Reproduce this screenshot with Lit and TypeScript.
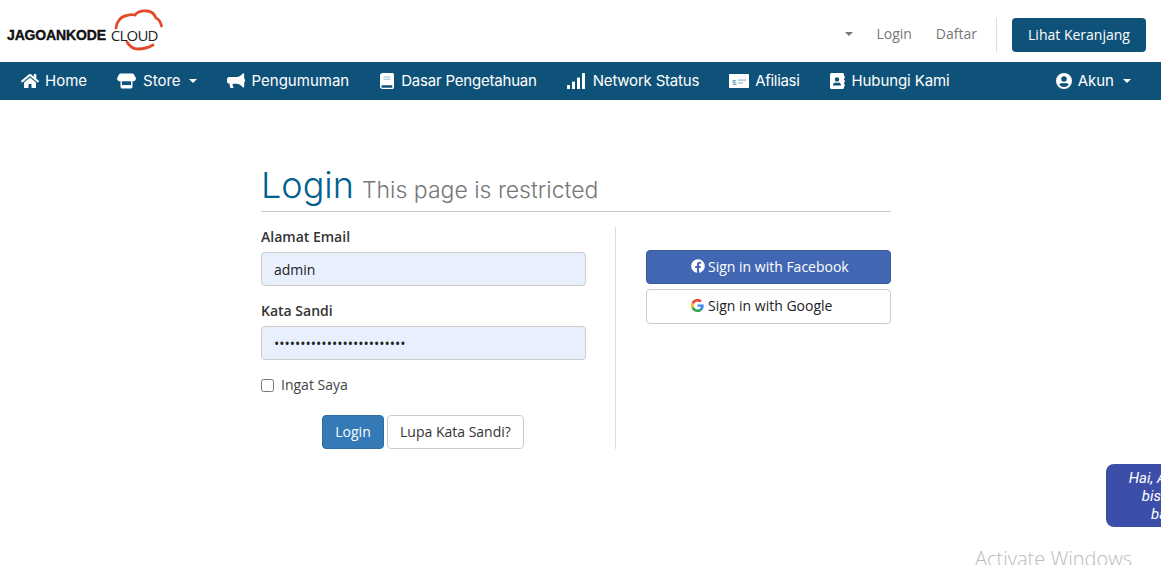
import { LitElement, html, css, svg } from "lit";
import { customElement } from "lit/decorators.js";

const ic = (vb: string, w: number, h: number, body: unknown) => html`<svg class="ic" viewBox=${vb} width=${w} height=${h} fill="currentColor" aria-hidden="true">${body}</svg>`;

const home = ic("0 0 576 512", 18, 16, svg`<path d="M280.37 148.26L96 300.11V464a16 16 0 0 0 16 16l112.06-.29a16 16 0 0 0 15.92-16V368a16 16 0 0 1 16-16h64a16 16 0 0 1 16 16v95.64a16 16 0 0 0 16 16.05L464 480a16 16 0 0 0 16-16V300L295.67 148.26a12.19 12.19 0 0 0-15.3 0zM571.6 251.47L488 182.56V44.05a12 12 0 0 0-12-12h-56a12 12 0 0 0-12 12v72.61L318.47 43a48 48 0 0 0-61 0L4.34 251.47a12 12 0 0 0-1.6 16.9l25.5 31A12 12 0 0 0 45.15 301l235.22-193.74a12.19 12.19 0 0 1 15.3 0L530.9 301a12 12 0 0 0 16.9-1.6l25.5-31a12 12 0 0 0-1.7-16.93z"/>`);
const store = ic("0 0 20 16", 19, 16, svg`<path d="M4 0h12c1 0 1.600.5 2 1.300L20 5.200c0 1.700-1.200 3-2.700 3-.4 0-.7-.1-1-.2v6c0 1.100-.9 2-2 2H5.700c-1.100 0-2-.9-2-2V8c-.3.1-.6.2-1 .2C1.200 8.200 0 6.900 0 5.200l2-3.900C2.400.5 3 0 4 0z"/><path fill="#0f5279" d="M5.200 8.300h9.600v4H5.200z"/>`);
const bullhorn = ic("0 0 18 16", 18, 16, svg`<path d="M16.300.300c-.4 0-.6.200-.8.500C14 2.500 12 4 9.500 4H2.200C1 4 0 5 0 6.300v2.200c0 1.200 1 2.200 2.200 2.200h.6l-.1 1c0 1 .3 2.200.8 3.300h3.300c-.7-1-1.200-2.100-1.200-3.300l.1-1h3.800c2.500 0 4.500 1.500 6 3.200.2.300.5.500.8.500.9 0 .9-.7.900-1V9.200c.5-.2.800-1 .8-1.800s-.3-1.600-.8-1.800V1.300c0-.3 0-1-.9-1z"/>`);
const book = ic("0 0 14 16", 14, 16, svg`<path fill-rule="evenodd" d="M2.500 0H12.500C13.300 0 14 .700 14 1.500v13c0 .800-.7 1.500-1.500 1.500H2.500C1.100 16 0 14.900 0 13.500v-11C0 1.100 1.100 0 2.500 0zM2.500 12.300a1.200 1.200 0 0 0 0 2.400h9.800v-2.400z"/><path fill="#9fb8c8" d="M3.500 3.500h7v1h-7zM3.500 5.800h7v1h-7z"/>`);
const signal = ic("0 0 18 16", 18, 16, svg`<rect x="0" y="12" width="3" height="4" rx=".6"/><rect x="5" y="8.500" width="3" height="7.500" rx=".6"/><rect x="10" y="4.500" width="3" height="11.500" rx=".6"/><rect x="15" y="0" width="3" height="16" rx=".6"/>`);
const money = ic("0 0 20 14", 20, 14, svg`<path d="M1 0h18c.6 0 1 .4 1 1v12c0 .6-.4 1-1 1H1c-.6 0-1-.4-1-1V1c0-.6.4-1 1-1z"/><path fill="#9fb8c8" d="M9 5.500h8v1.200H9zM9 8.300h5v1.200H9z"/><text x="3" y="10.500" font-size="8" font-family="Liberation Sans" fill="#4f87a8">$</text>`);
const contact = ic("0 0 15 16", 15, 16, svg`<path fill-rule="evenodd" d="M1.500 0H12.500C13.300 0 14 .700 14 1.500v13c0 .800-.7 1.500-1.500 1.500H1.500C.7 16 0 15.300 0 14.500v-13C0 .700.700 0 1.500 0zM7 4.200a2.200 2.200 0 1 0 0 4.400 2.200 2.200 0 0 0 0-4.400zM3 12.400h8c0-1.900-1.400-3-2.600-3-.5 0-.8.300-1.400.3s-.9-.3-1.400-.3C4.400 9.400 3 10.500 3 12.400z"/><path d="M14.300 3H15v2.500h-.7zM14.300 7H15v2.500h-.7zM14.300 11H15v2.500h-.7z"/>`);
const user = ic("0 0 16 16", 16, 16, svg`<path fill-rule="evenodd" d="M8 0a8 8 0 1 1 0 16A8 8 0 0 1 8 0zM8 3.200a2.800 2.800 0 1 0 0 5.600 2.800 2.800 0 0 0 0-5.600zM8 14a6 6 0 0 0 4.700-2.300C12.200 10.600 11 9.900 10 9.900c-.6 0-1 .3-2 .3s-1.400-.3-2-.3c-1 0-2.200.7-2.700 1.800A6 6 0 0 0 8 14z"/>`);
const fb = ic("0 0 512 512", 14, 14, svg`<path d="M504 256C504 119 393 8 256 8S8 119 8 256c0 123.780 90.690 226.380 209.250 245V327.690h-63V256h63v-54.640c0-62.150 37-96.480 93.670-96.480 27.140 0 55.520 4.840 55.520 4.840v61h-31.280c-30.800 0-40.410 19.120-40.410 38.730V256h68.780l-11 71.690h-57.780V501C413.310 482.380 504 379.780 504 256z"/>`);
const google = html`<svg class="ic" viewBox="0 0 48 48" width="13" height="13" aria-hidden="true"><path fill="#EA4335" d="M24 9.500c3.500 0 6.700 1.200 9.200 3.600l6.900-6.900C35.900 2.400 30.500 0 24 0 14.600 0 6.500 5.400 2.600 13.200l8 6.200C12.400 13.700 17.700 9.500 24 9.500z"/><path fill="#4285F4" d="M47 24.500c0-1.600-.1-3.100-.4-4.500H24v9h12.900c-.6 3-2.200 5.500-4.700 7.200l7.700 6c4.500-4.200 7.100-10.400 7.100-17.700z"/><path fill="#FBBC05" d="M10.500 28.600c-.5-1.400-.8-3-.8-4.600s.3-3.200.8-4.600l-8-6.200C.9 16.400 0 20.100 0 24s.9 7.600 2.600 10.800z"/><path fill="#34A853" d="M24 48c6.500 0 11.900-2.100 15.900-5.800l-7.700-6c-2.200 1.400-4.900 2.300-8.200 2.300-6.300 0-11.600-4.200-13.500-9.900l-8 6.200C6.500 42.600 14.600 48 24 48z"/></svg>`;

@customElement("app-root")
export class AppRoot extends LitElement {
  static styles = css`
    :host { display: block; position: relative; height: 565px; overflow: hidden; background: #fff; font-family: "Open Sans", sans-serif; font-size: 14px; color: #333; }
    * { box-sizing: border-box; }
    .ic { display: block; flex: none; }
    .top { height: 62px; display: flex; align-items: center; padding: 8px 15px 0 7px; }
    .logo { position: relative; display: flex; align-items: center; height: 44px; width: 156px; }
    .logo svg { position: absolute; left: 106px; top: -5px; }
    .logo b { position: relative; font: 900 14px/1 "Liberation Sans", sans-serif; letter-spacing: -.15px; color: #111; -webkit-text-stroke: .4px #111; }
    .logo span { position: relative; font: 400 15px/1 "Open Sans", sans-serif; color: #222; margin-left: 5px; letter-spacing: -.8px; }
    .top-right { margin-left: auto; display: flex; align-items: center; color: #777; }
    .caret { width: 0; height: 0; border-left: 4.500px solid transparent; border-right: 4.500px solid transparent; border-top: 4.500px solid currentColor; flex: none; }
    .top-right .caret { margin-bottom: 2px; }
    .top-right a { margin-left: 24px; padding-bottom: 3px; }
    .top-right a.first { margin-left: 23px; }
    .sep { width: 1px; height: 34px; background: #ddd; margin: 0 15px 0 19px; }
    .cart { width: 134px; height: 34px; border-radius: 4px; background: #0f5279; color: #fff; display: flex; align-items: center; justify-content: center; padding-bottom: 2px; }
    nav { height: 38px; background: #0f5279; color: #fff; display: flex; align-items: center; padding-left: 6px; font-family: Inter, sans-serif; font-size: 15px; }
    .item { display: flex; align-items: center; gap: 7px; padding: 0 15px; white-space: nowrap; }
    .item.g6 { gap: 6px; }
    .item.g8 { gap: 8px; }
    .item.wide { padding-right: 16px; }
    .item > .caret { margin-left: 1px; }
    .item span { display: block; padding-bottom: 2px; }
    .item.t1 span { letter-spacing: -.1px; }
    .item.t2 span { letter-spacing: -.2px; }
    .item.t3 span { letter-spacing: -.3px; }
    .spacer { flex: 1; }
    .item.akun { padding-right: 30px; gap: 6px; }
    .item.akun .caret { margin-left: 3px; }
    main { width: 630px; margin: 0 0 0 261px; padding-top: 62px; }
    .head { height: 50px; border-bottom: 1px solid #ccc; display: flex; align-items: baseline; gap: 8px; color: #00618f; font-family: Inter, sans-serif; font-size: 36px; font-weight: 300; line-height: 47px; }
    .head small { font-size: 23px; color: #777; font-weight: 300; }
    .cols { display: flex; margin-top: 15px; }
    .left { width: 355px; padding-right: 29px; border-right: 1px solid #ddd; height: 222px; }
    .right { margin-left: 30px; width: 245px; padding-top: 23px; }
    label.lbl { display: block; font-weight: 600; height: 25px; line-height: 20px; }
    input.tx { display: block; width: 325px; height: 34px; background: #e8f0fe; border: 1px solid #ccc; border-radius: 4px; padding: 0 12px; font: 14px "Open Sans", sans-serif; color: #222; margin-bottom: 15px; outline: none; }
    .chk { display: flex; align-items: center; gap: 7px; color: #444; height: 20px; }
    .chk input { margin: 0; width: 13px; height: 13px; }
    .chk span { display: block; padding-bottom: 2px; }
    .acts { display: flex; gap: 3px; margin-top: 20px; padding-left: 61px; }
    .btn { height: 34px; border: 1px solid #ccc; border-radius: 4px; display: flex; align-items: center; justify-content: center; padding: 0 12px 2px; background: #fff; color: #333; }
    .btn.pri { width: 62px; padding: 0 0 2px; background: #337ab7; border-color: #2e6da4; color: #fff; }
    .btn.soc { width: 245px; gap: 3px; padding: 0 0 2px 44px; justify-content: flex-start; }
    .btn.fb { background: #4267b2; border-color: #385899; color: #fff; margin-bottom: 5px; }
    .btn.gg { height: 35px; color: #222; gap: 4px; }
    .chat { position: absolute; left: 1106px; top: 464px; width: 134px; height: 63px; border-radius: 8px; background: #3c4ea8; color: #fff; font: italic 400 15px/18px Roboto, sans-serif; text-align: center; padding-top: 5px; }
    .win { position: absolute; left: 975px; top: 545px; font: 300 20px/28px "Open Sans", sans-serif; color: #bbb; white-space: nowrap; }
  `;

  render() {
    return html`
      <header class="top">
        <div class="logo">
          <svg width="52" height="44" viewBox="0 0 52 44" fill="none" stroke="#e04a27" stroke-width="2.800" stroke-linecap="round">
            <path d="M3 20C3.500 14 8 8 14 7.500c3-1 5-1.500 8-.5C24 4 29 2.500 34 3c5 .5 7.500 3 9 7 3 1 4.500 4 5.500 8"/>
            <path d="M14 34c3 5 7 7 11 7 5 0 10-1 15-4"/>
          </svg>
          <b>JAGOANKODE</b><span>CLOUD</span>
        </div>
        <div class="top-right">
          <i class="caret"></i>
          <a class="first">Login</a>
          <a>Daftar</a>
          <div class="sep"></div>
          <div class="cart">Lihat Keranjang</div>
        </div>
      </header>
      <nav>
        <div class="item g6">${home}<span>Home</span></div>
        <div class="item">${store}<span>Store</span><i class="caret"></i></div>
        <div class="item wide">${bullhorn}<span>Pengumuman</span></div>
        <div class="item t2">${book}<span>Dasar Pengetahuan</span></div>
        <div class="item g8 t2">${signal}<span>Network Status</span></div>
        <div class="item g6 t3">${money}<span>Afiliasi</span></div>
        <div class="item t1">${contact}<span>Hubungi Kami</span></div>
        <div class="spacer"></div>
        <div class="item akun">${user}<span>Akun</span><i class="caret"></i></div>
      </nav>
      <main>
        <div class="head">Login <small>This page is restricted</small></div>
        <div class="cols">
          <div class="left">
            <label class="lbl">Alamat Email</label>
            <input class="tx" type="text" .value=${"admin"} />
            <label class="lbl">Kata Sandi</label>
            <input class="tx" type="password" .value=${"abcdefghijklmnopqrstuvwxy"} />
            <label class="chk"><input type="checkbox" /><span>Ingat Saya</span></label>
            <div class="acts">
              <div class="btn pri">Login</div>
              <div class="btn">Lupa Kata Sandi?</div>
            </div>
          </div>
          <div class="right">
            <div class="btn soc fb">${fb}Sign in with Facebook</div>
            <div class="btn soc gg">${google}Sign in with Google</div>
          </div>
        </div>
      </main>
      <div class="chat">Hai, Ada yang<br />bisa kami<br />bantu?</div>
      <div class="win">Activate Windows</div>
    `;
  }
}
